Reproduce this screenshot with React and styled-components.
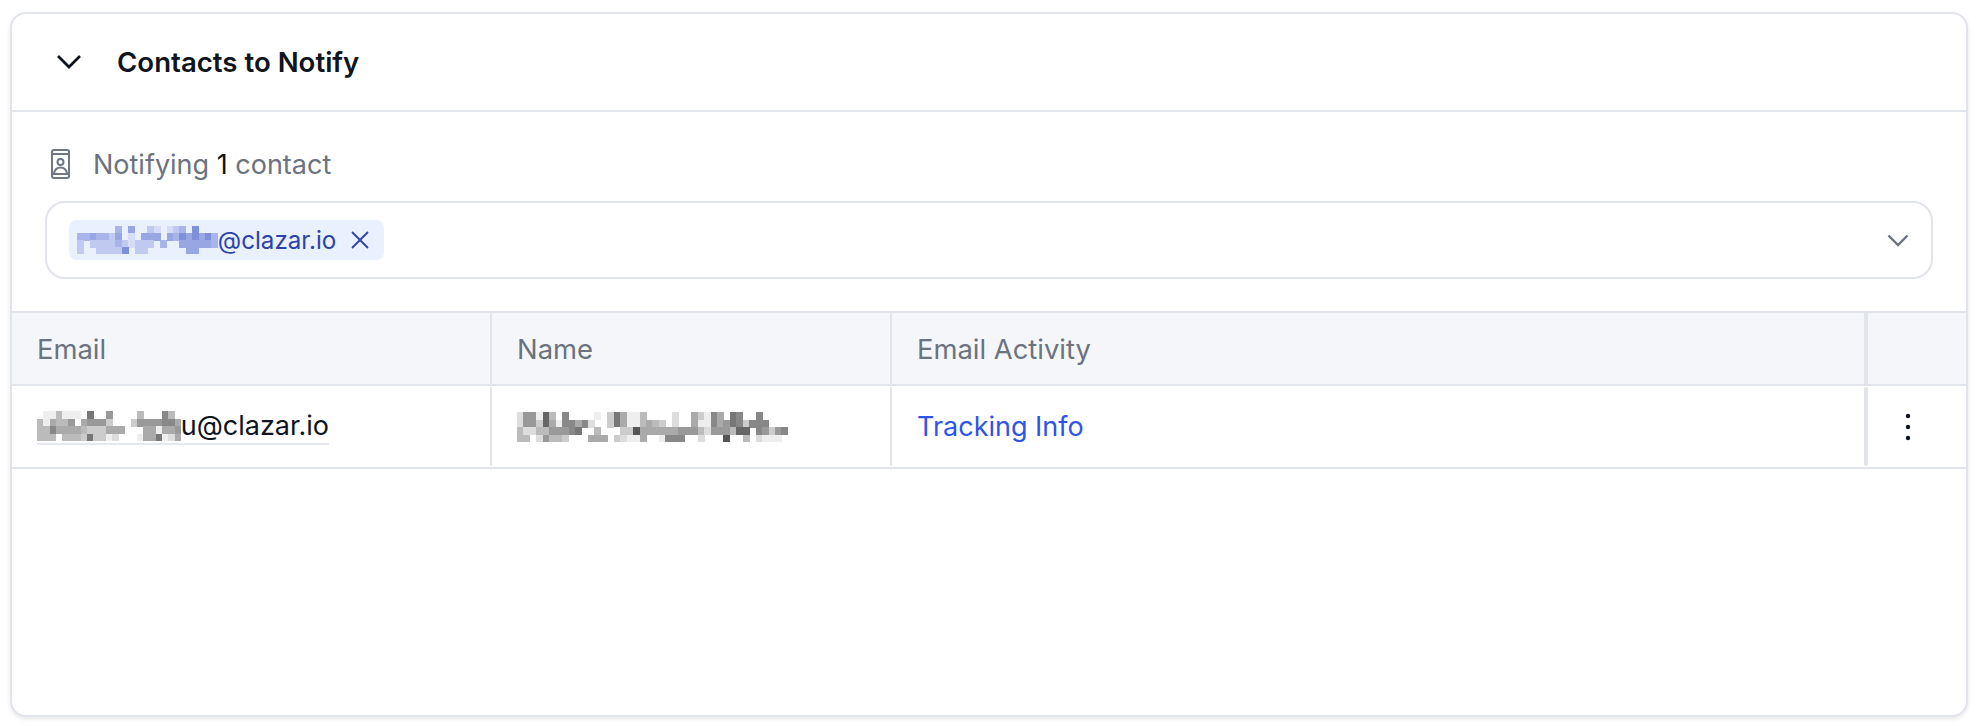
import styled, { createGlobalStyle } from "styled-components"

const GlobalStyle = createGlobalStyle`
  html, body {
    margin: 0;
    background: #fff;
    font-family: Inter, "Liberation Sans", sans-serif;
  }
`

const Page = styled.div`
  padding: 12px 10px 10px;
`
const Card = styled.section`
  height: 705px;
  box-sizing: border-box;
  border: 2px solid #e2e4ec;
  border-radius: 16px;
  background: #fff;
  box-shadow: 0 2px 4px rgba(20, 24, 40, 0.1);
  overflow: hidden;
`
const Header = styled.header`
  height: 98px;
  box-sizing: border-box;
  border-bottom: 2px solid #e2e4ec;
  padding-left: 44px;
  display: flex;
  align-items: center;
  gap: 35px;
`
const Title = styled.h2`
  margin: 0;
  font-size: 27.6px;
  font-weight: 600;
  color: #0f1520;
`
const Section = styled.div`
  padding: 33px 33px 32px;
`
const Summary = styled.div`
  height: 38px;
  display: flex;
  align-items: center;
  gap: 23px;
  padding-left: 6px;
  font-size: 27px;
  color: #6b7280;
`
const Count = styled.span`
  color: #0f1520;
`
const SelectBox = styled.div`
  margin-top: 18px;
  height: 78px;
  box-sizing: border-box;
  border: 2px solid #e2e4ec;
  border-radius: 20px;
  display: flex;
  align-items: center;
  justify-content: space-between;
  padding: 0 22px 0 22px;
`
const Chip = styled.div`
  height: 40px;
  display: flex;
  align-items: center;
  padding: 0 14px 0 8px;
  border-radius: 8px;
  background: #e9f0fe;
  color: #2c42ad;
  font-size: 24.2px;
`
const ChipRemove = styled.svg`
  margin-left: 14px;
  display: block;
`
const Table = styled.div`
  display: grid;
  grid-template-columns: 480px 400px 976px 1fr;
`
const HeadCell = styled.div`
  height: 75px;
  box-sizing: border-box;
  display: flex;
  align-items: center;
  padding-left: 25px;
  background: #f5f6fa;
  border-top: 2px solid #e2e4ec;
  border-bottom: 2px solid #e2e4ec;
  border-right: ${(p) => p.$rule ?? 2}px solid #e2e4ec;
  font-size: 27.4px;
  color: #6b7280;
`
const Cell = styled.div`
  height: 83px;
  box-sizing: border-box;
  border-bottom: 2px solid #e2e4ec;
  display: flex;
  align-items: center;
  padding-left: 25px;
  font-size: 27px;
  color: #0f1520;
`
const CellRule = styled.span`
  align-self: stretch;
  width: ${(p) => p.$size || 2}px;
  margin: 1px 0 1px auto;
  border-radius: 2px;
  background: #e2e4ec;
`
const Underlined = styled.span`
  display: inline-flex;
  align-items: center;
  height: 34px;
  border-bottom: 2px solid #e6e8ef;
`
const Redacted = styled.svg`
  display: block;
  flex: none;
`
const TrackingLink = styled.a`
  color: #2f54eb;
  text-decoration: none;
`
const ActionCell = styled(Cell)`
  padding: 0 18px 0 0;
  justify-content: center;
`

const greys = (c) => `#${c}${c}${c}${c}${c}${c}`
const blues = {
  1: "#d5dcf7",
  2: "#c0caf1",
  3: "#a9b5ea",
  4: "#98a6e3",
  5: "#7f90da",
}

const Mosaic = ({ rows, cell, rowHeight, paint }) => (
  <Redacted
    width={rows[0].length * cell}
    height={rows.length * rowHeight}
    shapeRendering="crispEdges"
  >
    {rows.map((row, y) =>
      [...row].map((c, x) =>
        c === "." ? null : (
          <rect
            key={`${x}-${y}`}
            x={x * cell}
            y={y * rowHeight}
            width={cell + 0.5}
            height={rowHeight + 0.5}
            fill={paint(c)}
          />
        )
      )
    )}
  </Redacted>
)

const chipRows = [
  "......3.4..21.123.5...",
  "3343324.1.444.43545453",
  "2.2222321222.3..444443",
  "2..22225.22......44...",
]
const emailRows = [
  "feebeee.7..9....b...8b.",
  "beabb9.a999c...c999988a",
  "bb8aaaabcccaaa...aaeaa9",
  "bbbfbbbc7cced...eaa7eda",
]
const nameRows = [
  "d99e6b.8....e.c7aeeb....d..ace8a.78..8..ff",
  "d99c6ae88a8d..c7aeebabc.d..aee8a978c888ff.",
  "bddbb99987..b..fcc5aaaaaa999bd999b66.89c98",
  "bbfd9bbc.ffaaa.cdeea.fe888..d...5..b.deee.",
]

const PhoneContact = () => (
  <svg width="19" height="30" viewBox="0 0 19 30" fill="none" stroke="#6f7684" strokeWidth="2">
    <rect x="1" y="1" width="17" height="28" rx="2" />
    <path d="M1 5h17M1 25h17" />
    <circle cx="9.5" cy="13" r="3" />
    <path d="M3 24c1-4 3.500-5.500 6.500-5.500S15 20 16 24" />
  </svg>
)

const App = () => {
  return (
    <Page>
      <GlobalStyle />
      <Card>
        <Header>
          <svg width="26" height="16" viewBox="0 0 26 16" fill="none">
            <path d="M2 2l11 11L24 2" stroke="#0f1520" strokeWidth="2.8" />
          </svg>
          <Title>Contacts to Notify</Title>
        </Header>
        <Section>
          <Summary>
            <PhoneContact />
            <span>
              Notifying <Count>1</Count> contact
            </span>
          </Summary>
          <SelectBox>
            <Chip>
              <Mosaic rows={chipRows} cell={6.4} rowHeight={7} paint={(c) => blues[c]} />
              @clazar.io
              <ChipRemove width="20" height="20" viewBox="0 0 20 20" fill="none">
                <path d="M2 2l16 16M18 2L2 18" stroke="#2c42ad" strokeWidth="1.8" />
              </ChipRemove>
            </Chip>
            <svg width="22" height="13" viewBox="0 0 22 13" fill="none">
              <path d="M1.500 1.500l9.500 9.500 9.500-9.500" stroke="#6b7280" strokeWidth="2.4" />
            </svg>
          </SelectBox>
        </Section>
        <Table>
          <HeadCell>Email</HeadCell>
          <HeadCell>Name</HeadCell>
          <HeadCell $rule={4}>Email Activity</HeadCell>
          <HeadCell $rule={0} />

          <Cell>
            <Underlined>
              <Mosaic rows={emailRows} cell={6.25} rowHeight={7.5} paint={greys} />
              u@clazar.io
            </Underlined>
            <CellRule />
          </Cell>
          <Cell>
            <Mosaic rows={nameRows} cell={6.45} rowHeight={7.5} paint={greys} />
            <CellRule />
          </Cell>
          <Cell>
            <TrackingLink href="#tracking">Tracking Info</TrackingLink>
            <CellRule $size={4} />
          </Cell>
          <ActionCell>
            <svg width="6" height="30" viewBox="0 0 6 30" fill="#0f1520">
              <circle cx="3" cy="4" r="2.200" />
              <circle cx="3" cy="15" r="2.200" />
              <circle cx="3" cy="26" r="2.200" />
            </svg>
          </ActionCell>
        </Table>
      </Card>
    </Page>
  )
}

export default App
